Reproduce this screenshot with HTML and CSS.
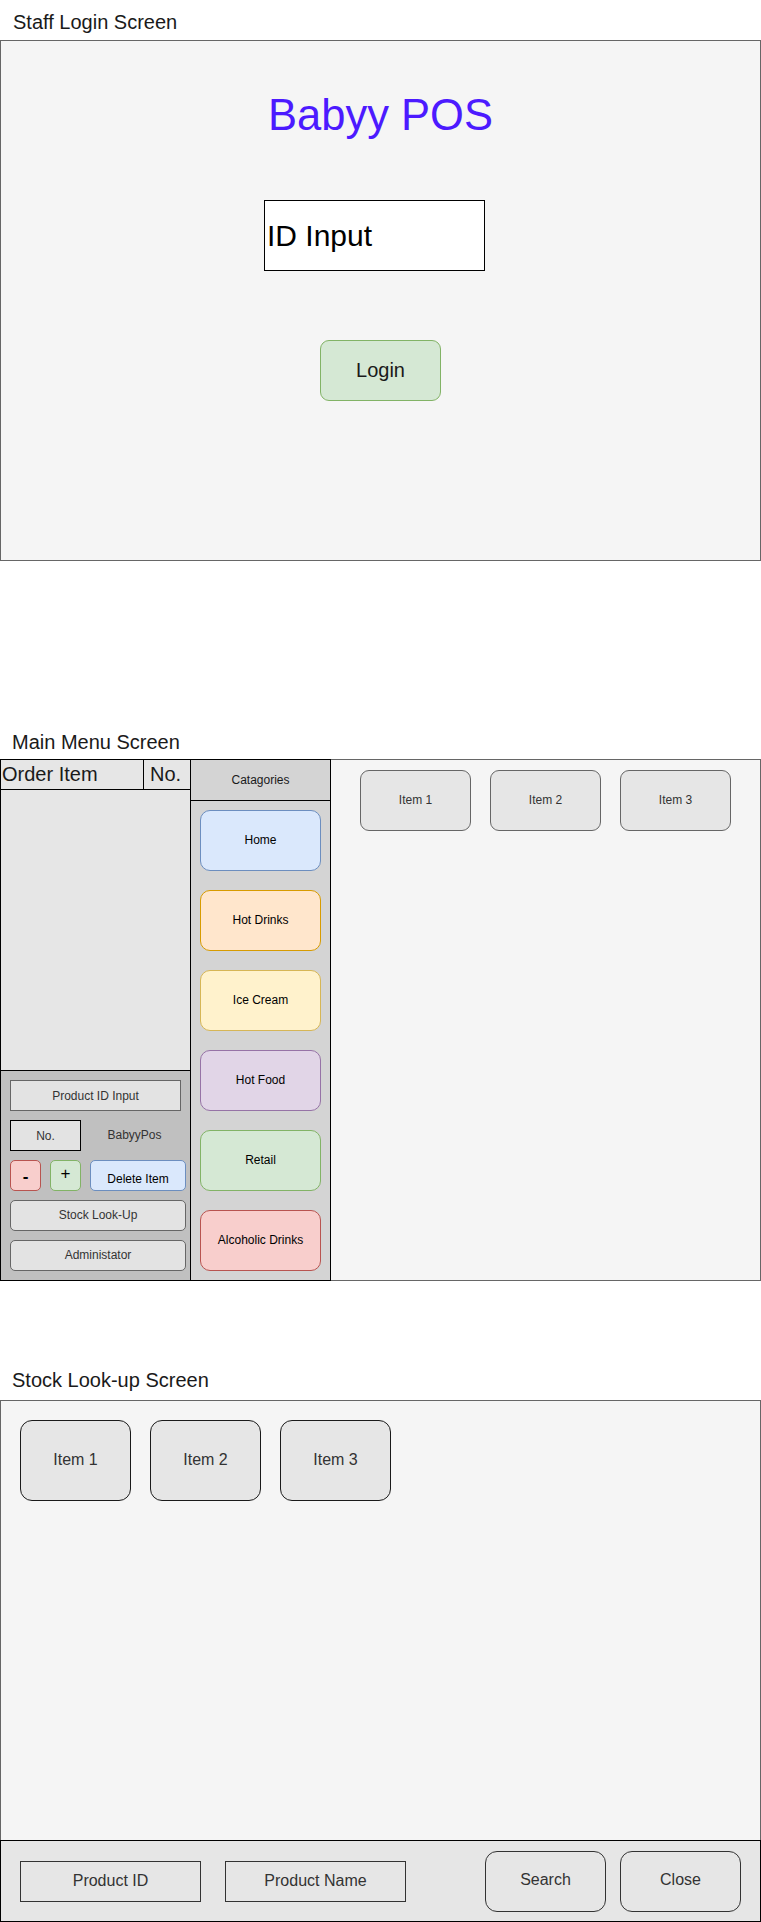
FILE: index.html
```html
<!DOCTYPE html>
<html lang="en">
<head>
<meta charset="utf-8">
<title>Babyy POS mockups</title>
<link rel="stylesheet" href="styles.css">
</head>
<body>
<div class="page">
  <div class="screen-title login-title">Staff Login Screen</div>
  <div class="login-frame">
    <div class="brand">Babyy POS</div>
    <div class="id-input">ID Input</div>
    <div class="login-btn">Login</div>
  </div>

  <div class="screen-title main-title">Main Menu Screen</div>
  <div class="main-frame">
    <div class="order-panel">
      <div class="order-head">
        <div class="order-head-item">Order Item</div>
        <div class="order-head-no">No.</div>
      </div>
      <div class="order-list"></div>
      <div class="order-controls">
        <div class="ctl ctl-input">Product ID Input</div>
        <div class="ctl-row">
          <div class="ctl ctl-no">No.</div>
          <div class="ctl-brand">BabyyPos</div>
        </div>
        <div class="ctl-row">
          <div class="ctl ctl-small ctl-minus">-</div>
          <div class="ctl ctl-small ctl-plus">+</div>
          <div class="ctl ctl-delete">Delete Item</div>
        </div>
        <div class="ctl ctl-wide">Stock Look-Up</div>
        <div class="ctl ctl-wide">Administator</div>
      </div>
    </div>
    <div class="cat-panel">
      <div class="cat-head">Catagories</div>
      <div class="cat-list">
        <div class="cat cat-home">Home</div>
        <div class="cat cat-drinks">Hot Drinks</div>
        <div class="cat cat-ice">Ice Cream</div>
        <div class="cat cat-food">Hot Food</div>
        <div class="cat cat-retail">Retail</div>
        <div class="cat cat-alcohol">Alcoholic Drinks</div>
      </div>
    </div>
    <div class="items-area">
      <div class="menu-item">Item 1</div>
      <div class="menu-item">Item 2</div>
      <div class="menu-item">Item 3</div>
    </div>
  </div>

  <div class="screen-title stock-title">Stock Look-up Screen</div>
  <div class="stock-frame">
    <div class="stock-body">
      <div class="stock-item">Item 1</div>
      <div class="stock-item">Item 2</div>
      <div class="stock-item">Item 3</div>
    </div>
    <div class="stock-bar">
      <div class="field">Product ID</div>
      <div class="field field-name">Product Name</div>
      <div class="bar-btn bar-search">Search</div>
      <div class="bar-btn bar-close">Close</div>
    </div>
  </div>
</div>
</body>
</html>
```

FILE: styles.css
```css
* { box-sizing: border-box; }
html, body {
  margin: 0;
  padding: 0;
  background: #ffffff;
}
body {
  font-family: "Liberation Sans", Arial, sans-serif;
  color: #1a1a1a;
}
.page {
  width: 761px;
}

/* section titles */
.screen-title {
  font-size: 20px;
  line-height: 20px;
  color: #1a1a1a;
  padding-left: 12px;
}
.login-title {
  height: 40px;
  padding-top: 12px;
  padding-left: 13px;
}
.main-title {
  height: 198px;
  padding-top: 171px;
}
.stock-title {
  height: 119px;
  padding-top: 89px;
}

/* login */
.login-frame {
  height: 521px;
  border: 1px solid #666666;
  background: #f5f5f5;
  display: flex;
  flex-direction: column;
  align-items: center;
}
.brand {
  margin-top: 49px;
  font-size: 43.5px;
  line-height: 50px;
  color: #4c1aff;
}
.id-input {
  align-self: flex-start;
  margin-left: 263px;
  margin-top: 60px;
  width: 221px;
  height: 71px;
  border: 1px solid #000000;
  background: #ffffff;
  font-size: 30px;
  color: #000000;
  display: flex;
  align-items: center;
  padding-left: 2px;
}
.login-btn {
  margin-top: 69px;
  width: 121px;
  height: 61px;
  border: 1px solid #82b366;
  border-radius: 9px;
  background: #d5e8d4;
  font-size: 20px;
  color: #1a1a1a;
  display: flex;
  align-items: center;
  justify-content: center;
}

/* main menu */
.main-frame {
  display: flex;
  height: 522px;
}
.order-panel {
  width: 191px;
  border: 1px solid #000000;
  display: flex;
  flex-direction: column;
}
.order-head {
  height: 30px;
  display: flex;
  border-bottom: 1px solid #000000;
  background: #e6e6e6;
  font-size: 20px;
  color: #1a1a1a;
}
.order-head-item {
  width: 143px;
  border-right: 1px solid #000000;
  padding-left: 1px;
  display: flex;
  align-items: center;
}
.order-head-no {
  flex: 1;
  display: flex;
  align-items: center;
  padding-left: 6px;
}
.order-list {
  height: 280px;
  background: #e6e6e6;
}
.order-controls {
  flex: 1;
  border-top: 1px solid #000000;
  background: #c0c0c0;
  padding: 9px 0 0 9px;
  display: flex;
  flex-direction: column;
  gap: 9px;
  font-size: 12px;
  color: #333333;
}
.ctl {
  height: 31px;
  border: 1px solid #666666;
  background: #e3e3e3;
  display: flex;
  align-items: center;
  justify-content: center;
}
.ctl-input {
  width: 171px;
}
.ctl-row {
  display: flex;
  align-items: center;
  height: 31px;
}
.ctl-no {
  width: 71px;
  border-color: #000000;
  background: #e3e3e3;
}
.ctl-brand {
  width: 107px;
  text-align: center;
  color: #333333;
  padding-bottom: 2px;
}
.ctl-small {
  width: 31px;
  border-radius: 5px;
  font-size: 17px;
  color: #000000;
}
.ctl-minus {
  background: #f8cecc;
  border-color: #b85450;
  font-weight: bold;
  padding-top: 2px;
}
.ctl-plus {
  margin-left: 9px;
  background: #d5e8d4;
  border-color: #82b366;
  padding-bottom: 3px;
}
.ctl-delete {
  margin-left: 9px;
  width: 96px;
  border-radius: 5px;
  background: #dae8fc;
  border-color: #6c8ebf;
  color: #000000;
  padding-top: 6px;
}
.ctl-wide {
  width: 176px;
  border-radius: 5px;
  padding-bottom: 2px;
}

.cat-panel {
  width: 141px;
  margin-left: -1px;
  border: 1px solid #000000;
  background: #d4d4d4;
  display: flex;
  flex-direction: column;
}
.cat-head {
  height: 41px;
  border-bottom: 1px solid #000000;
  font-size: 12px;
  color: #1a1a1a;
  display: flex;
  align-items: center;
  justify-content: center;
  padding-bottom: 1px;
}
.cat-list {
  padding-top: 9px;
  display: flex;
  flex-direction: column;
  align-items: center;
  gap: 19px;
}
.cat {
  width: 121px;
  height: 61px;
  border: 1px solid;
  border-radius: 10px;
  font-size: 12px;
  color: #000000;
  display: flex;
  align-items: center;
  justify-content: center;
  padding-bottom: 2px;
}
.cat-home { background: #dae8fc; border-color: #6c8ebf; }
.cat-drinks { background: #ffe6cc; border-color: #d79b00; }
.cat-ice { background: #fff2cc; border-color: #d6b656; }
.cat-food { background: #e1d5e7; border-color: #9673a6; }
.cat-retail { background: #d5e8d4; border-color: #82b366; }
.cat-alcohol { background: #f8cecc; border-color: #b85450; }

.items-area {
  flex: 1;
  border: 1px solid #666666;
  border-left: none;
  background: #f5f5f5;
  padding: 10px 0 0 29px;
  display: flex;
  align-items: flex-start;
  gap: 19px;
}
.menu-item {
  width: 111px;
  height: 61px;
  border: 1px solid #666666;
  border-radius: 9px;
  background: #e6e6e6;
  font-size: 12px;
  color: #333333;
  display: flex;
  align-items: center;
  justify-content: center;
  padding-bottom: 2px;
}

/* stock look-up */
.stock-frame {
  height: 522px;
  display: flex;
  flex-direction: column;
}
.stock-body {
  height: 440px;
  border: 1px solid #666666;
  border-bottom: none;
  background: #f5f5f5;
  padding: 19px 0 0 19px;
  display: flex;
  align-items: flex-start;
  gap: 19px;
}
.stock-item {
  width: 111px;
  height: 81px;
  border: 1px solid #1a1a1a;
  border-radius: 12px;
  background: #e6e6e6;
  font-size: 16px;
  color: #333333;
  display: flex;
  align-items: center;
  justify-content: center;
  padding-bottom: 2px;
}
.stock-bar {
  height: 82px;
  border: 1px solid #000000;
  background: #e6e6e6;
  display: flex;
  align-items: center;
  padding: 0 19px;
  font-size: 16px;
  color: #333333;
}
.field {
  width: 181px;
  height: 41px;
  border: 1px solid #333333;
  background: #e6e6e6;
  display: flex;
  align-items: center;
  justify-content: center;
}
.field-name {
  margin-left: 24px;
}
.bar-btn {
  width: 121px;
  height: 61px;
  border: 1px solid #333333;
  border-radius: 12px;
  background: #e6e6e6;
  display: flex;
  align-items: center;
  justify-content: center;
  padding-bottom: 2px;
}
.bar-search {
  margin-left: auto;
}
.bar-close {
  margin-left: 14px;
}
```
